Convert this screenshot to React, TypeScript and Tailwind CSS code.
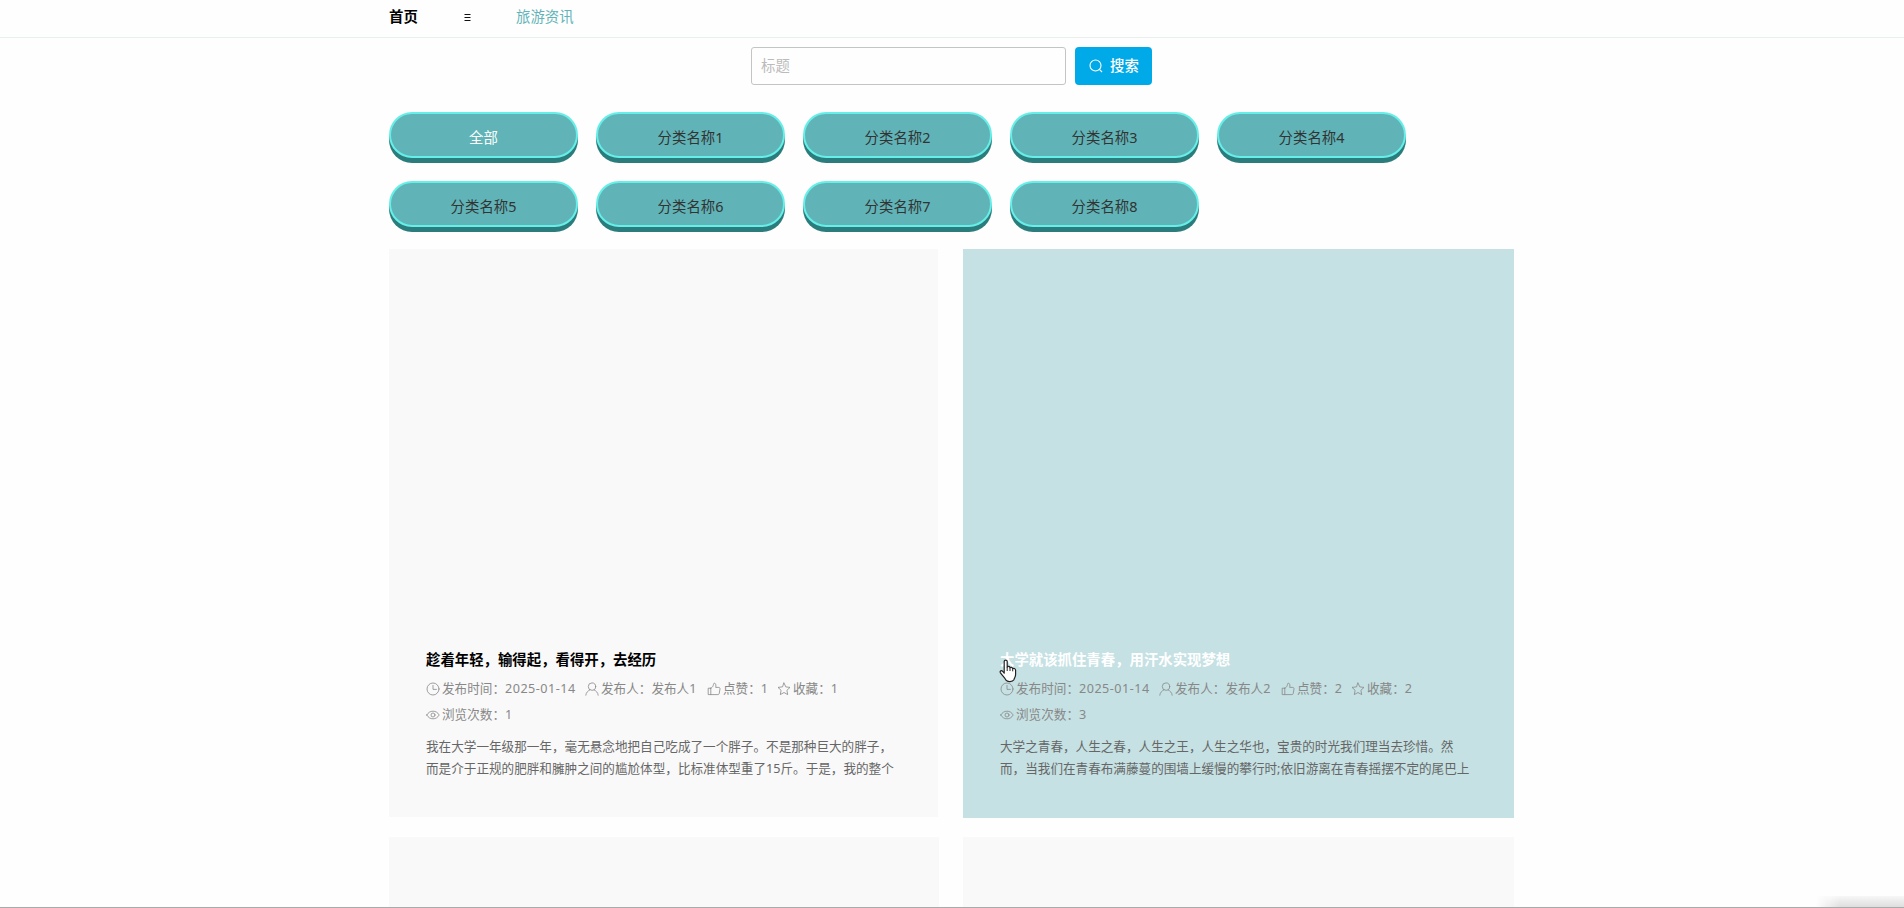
import { ReactNode } from "react"

type Article = {
  title: string
  date: string
  author: string
  likes: number
  favorites: number
  views: number
  summary: string[]
  active?: boolean
}

const CATEGORIES = [
  "全部",
  "分类名称1",
  "分类名称2",
  "分类名称3",
  "分类名称4",
  "分类名称5",
  "分类名称6",
  "分类名称7",
  "分类名称8",
]

const ARTICLES: Article[] = [
  {
    title: "趁着年轻，输得起，看得开，去经历",
    date: "2025-01-14",
    author: "发布人1",
    likes: 1,
    favorites: 1,
    views: 1,
    summary: [
      "我在大学一年级那一年，毫无悬念地把自己吃成了一个胖子。不是那种巨大的胖子，",
      "而是介于正规的肥胖和臃肿之间的尴尬体型，比标准体型重了15斤。于是，我的整个",
    ],
  },
  {
    title: "大学就该抓住青春，用汗水实现梦想",
    date: "2025-01-14",
    author: "发布人2",
    likes: 2,
    favorites: 2,
    views: 3,
    summary: [
      "大学之青春，人生之春，人生之王，人生之华也，宝贵的时光我们理当去珍惜。然",
      "而，当我们在青春布满藤蔓的围墙上缓慢的攀行时;依旧游离在青春摇摆不定的尾巴上",
    ],
    active: true,
  },
]

/* ─── icons ─── */

const Icon = ({ children }: { children: ReactNode }) => (
  <svg
    viewBox="0 0 14 14"
    className="mr-[2px] size-[14px] flex-shrink-0"
    fill="none"
    stroke="currentColor"
    strokeWidth="0.8"
    strokeLinejoin="round"
    strokeLinecap="round"
  >
    {children}
  </svg>
)

const ClockIcon = () => (
  <Icon>
    <circle cx="7" cy="7" r="6" />
    <path d="M7 3.4V7.4H10.4" />
  </Icon>
)

const UserIcon = () => (
  <Icon>
    <circle cx="7" cy="4.6" r="3.7" />
    <path d="M0.8 13.2C1.1 10.6 2.7 8.9 5 7.8M13.2 13.2C12.9 10.6 11.3 8.9 9 7.8" />
  </Icon>
)

const LikeIcon = () => (
  <Icon>
    <path d="M3.8 6.2H1.2V12.6H3.8M3.8 6.2V12.6H10.9C11.6 12.6 12 12.2 12.2 11.6L13 7C13.1 6 12.6 5.4 11.8 5.4H8.7C9.1 3.8 9 1.2 7.4 1.2C6.4 1.2 6.6 2.4 6.2 3.5C5.8 4.8 4.9 5.8 3.8 6.2Z" />
  </Icon>
)

const StarIcon = () => (
  <Icon>
    <path d="M7 1L8.8 4.9L13 5.4L9.9 8.3L10.7 12.6L7 10.5L3.3 12.6L4.1 8.3L1 5.4L5.2 4.9Z" />
  </Icon>
)

const EyeIcon = () => (
  <Icon>
    <path d="M0.8 7C2.3 4.4 4.4 3.2 7 3.2S11.7 4.4 13.2 7C11.7 9.6 9.6 10.8 7 10.8S2.3 9.6 0.8 7Z" />
    <circle cx="7" cy="7" r="2" />
  </Icon>
)

const HandCursor = () => (
  <svg viewBox="0 0 18 24" className="absolute -left-px top-[11px] h-6 w-[18px]">
    <path
      d="M5.2 14.2V2.6C5.2 .5 8.2 .5 8.2 2.6V8.2C8.6 7 10.8 7.2 11 8.8C11.6 7.8 13.5 8.2 13.7 9.7C14.5 9 16.6 9.5 16.6 11.3V15.5C16.6 18.2 15.2 19 14.9 20.7C13.6 23 8.5 23.2 7 21.2C5.8 18.8 3.2 16.5 1.3 13.6C.5 12 2.6 11 3.7 12.4Z"
      fill="#fff"
      stroke="#222"
      strokeWidth="1.2"
      strokeLinejoin="round"
    />
    <path d="M8.2 8.2V12M11 8.8V12M13.7 9.7V12.3" stroke="#222" />
  </svg>
)

/* ─── sections ─── */

function NavBar() {
  return (
    <header className="h-[38px] shrink-0 border-b border-[#e9efef] pl-[389px]">
      <nav className="flex h-[34px] items-center text-[14.4px]">
        <span className="w-[75px] font-bold text-black">首页</span>
        <svg viewBox="0 0 7 9" className="mr-[45px] h-[9px] w-[7px]" stroke="#111" strokeWidth="1">
          <path d="M0.5 1.5H6.5M0.5 4.5H6.5M0.5 7.5H6.5" />
        </svg>
        <span className="text-[#62b4b8]">旅游资讯</span>
      </nav>
    </header>
  )
}

function SearchBar() {
  return (
    <div className="flex shrink-0 justify-center gap-[9px] pr-[1px] pt-[9px]">
      <input
        placeholder="标题"
        className="h-[38px] w-[315px] rounded-[3px] border border-[#c4c4c4] px-[9px] pb-[2px] text-[14.4px] outline-none placeholder:text-[#bbb]"
      />
      <button className="flex h-[38px] w-[77px] items-center rounded-[4px] bg-[#00a9e8] pl-[14px] text-[14.4px] font-medium text-white">
        <svg
          viewBox="0 0 14 14"
          className="mr-[7px] size-[14px]"
          fill="none"
          stroke="currentColor"
          strokeWidth="1.1"
        >
          <circle cx="6.5" cy="6.5" r="5.5" />
          <path d="M10.4 10.4L13 13" />
        </svg>
        搜索
      </button>
    </div>
  )
}

function Categories() {
  return (
    <div className="flex flex-wrap gap-x-[18px] gap-y-[22.5px] pt-[27px]">
      {CATEGORIES.map((name, i) => (
        <button
          key={name}
          className={`h-[46px] w-[189px] rounded-[23px] border-2 border-[#66efe8] bg-[#60b4b8] pt-[6px] text-[14.4px] shadow-[0_5px_0_#2b7c7c] ${
            i === 0 ? "text-white" : "text-[#333]"
          }`}
        >
          {name}
        </button>
      ))}
    </div>
  )
}

function ArticleCard({ article }: { article: Article }) {
  const { active } = article
  return (
    <article
      className={
        active
          ? "h-[569px] w-[551px] bg-[#c5e1e3] px-[37px] pt-[399px]"
          : "h-[568px] w-[549px] bg-[#f9f9f9] px-[37px] pt-[399px]"
      }
    >
      <div className="relative">
        <h3
          className={`text-[14.4px] font-bold leading-[24px] ${active ? "text-white" : "text-black"}`}
        >
          {article.title}
        </h3>
        {active && <HandCursor />}
      </div>
      <div className="mt-[4px] flex flex-wrap whitespace-nowrap text-[12.6px] leading-[26px] text-[#888]">
        <span className="flex w-[159px] items-center">
          <ClockIcon />
          发布时间：<span className="tracking-[0.5px]">{article.date}</span>
        </span>
        <span className="flex w-[122px] items-center">
          <UserIcon />
          发布人：{article.author}
        </span>
        <span className="flex w-[70px] items-center">
          <LikeIcon />
          点赞：{article.likes}
        </span>
        <span className="flex w-[100px] items-center">
          <StarIcon />
          收藏：{article.favorites}
        </span>
        <span className="flex items-center">
          <EyeIcon />
          浏览次数：{article.views}
        </span>
      </div>
      <p className="mt-[8px] whitespace-nowrap text-[12.6px] leading-[22px] text-[#666]">
        {article.summary.map((line) => (
          <span key={line} className="block">
            {line}
          </span>
        ))}
      </p>
    </article>
  )
}

export default function App() {
  return (
    <div className="relative flex h-[908px] w-[1904px] flex-col overflow-hidden border-b border-[#aaa] bg-[#fefefe] font-['Noto_Sans','Noto_Sans_CJK_SC',sans-serif]">
      <NavBar />
      <SearchBar />
      <main className="ml-[389px] min-h-0 w-[1126px] flex-1">
        <Categories />
        <div className="mt-[22.5px] grid grid-cols-[549px_551px] gap-x-[25px] gap-y-[19px]">
          {ARTICLES.map((article) => (
            <ArticleCard key={article.title} article={article} />
          ))}
          <div className="h-[568px] w-[550px] bg-[#f9f9f9]" />
          <div className="h-[568px] bg-[#f9f9f9]" />
        </div>
      </main>
      {/* soft shade in the bottom corner */}
      <div className="absolute bottom-0 right-0 h-[11px] w-[88px] bg-gradient-to-b from-[#f7f7f7] to-[#dedede] [mask-image:linear-gradient(to_right,transparent,black_24px)]" />
    </div>
  )
}
